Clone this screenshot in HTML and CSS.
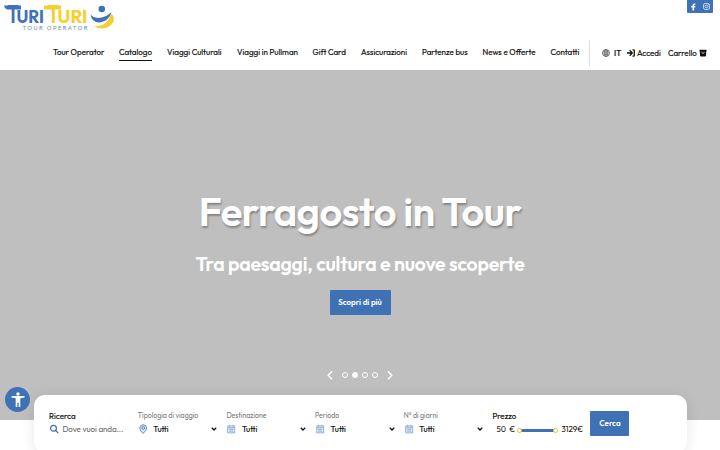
FILE: index.html
```html
<!DOCTYPE html>
<html lang="it">

<head>
    <meta charset="UTF-8">
    <meta name="viewport" content="width=device-width, initial-scale=1.0">
    <title>Turi Turi Tour Operator</title>
    <link rel="stylesheet" href="styles.css">
</head>

<body>
    <header>
        <div class="topbar">
            <a href="#" class="logo">
                <svg width="112" height="28" viewBox="0 0 112 28">
                    <g class="logo-blue">
                        <path d="M0 1.500h17v4H3Q.5 4.700 0 1.500z" />
                        <text x="3.500" y="19" font-size="25" textLength="11" lengthAdjust="spacingAndGlyphs">T</text>
                        <text x="12.500" y="19" font-size="18" textLength="27.500" lengthAdjust="spacingAndGlyphs">URI</text>
                    </g>
                    <g class="logo-yellow">
                        <path d="M40 1.500h17v4H40z" />
                        <text x="44" y="19" font-size="25" textLength="11" lengthAdjust="spacingAndGlyphs">T</text>
                        <text x="53.500" y="19" font-size="18" textLength="30" lengthAdjust="spacingAndGlyphs">URI</text>
                    </g>
                    <text class="logo-sub" x="18.500" y="25.700" textLength="65">TOUR OPERATOR</text>
                    <path fill="#f3d02f" d="M90 22.200Q104 22.500 107 9.500Q112.500 14 108 20Q101 27.500 90 22.200z" />
                    <path fill="#3f72b5" d="M86.500 10.500Q89 13.500 94 14Q101 13.800 107.500 8.200Q105 16.500 97 18.300Q88 19.500 86.500 10.500z" />
                    <circle cx="97.800" cy="5" r="3.300" fill="#3f72b5" />
                </svg>
            </a>
            <div class="social">
                <svg width="7" height="8" viewBox="0 0 7 8"><path d="M2.500 7.500V4.500H1.300V3H2.500V2Q2.500 .4 4.400 .4h1v1.300H4.800Q4.100 1.700 4.100 2.300V3H5.400L5.200 4.500H4.100v3z" fill="#fff" /></svg>
                <svg width="7" height="7" viewBox="0 0 7 7" fill="none" stroke="#fff" stroke-width=".7"><rect x=".5" y=".5" width="6" height="6" rx="1.700" /><circle cx="3.500" cy="3.500" r="1.400" /><circle cx="5.200" cy="1.800" r=".1" /></svg>
            </div>
        </div>
        <div class="menu">
            <nav>
                <a href="#">Tour Operator</a>
                <a href="#" class="active">Catalogo</a>
                <a href="#">Viaggi Culturali</a>
                <a href="#">Viaggi in Pullman</a>
                <a href="#">Gift Card</a>
                <a href="#">Assicurazioni</a>
                <a href="#">Partenze bus</a>
                <a href="#">News e Offerte</a>
                <a href="#">Contatti</a>
            </nav>
            <div class="tools">
                <a href="#" class="lang">
                    <svg width="8" height="8" viewBox="0 0 8 8" fill="none" stroke="#444" stroke-width=".6"><circle cx="4" cy="4" r="3.600" /><ellipse cx="4" cy="4" rx="1.700" ry="3.600" /><path d="M.4 4h7.200M4 .4v7.200M1 2.200h6M1 5.800h6" /></svg>
                    <span>IT</span>
                </a>
                <a href="#" class="login">
                    <svg width="8" height="8" viewBox="0 0 8 8" fill="none" stroke="#111" stroke-width="1.300"><path d="M0 4h5M2.700 1.300L5.300 4 2.700 6.700M5.500 .8H6.500Q7.300 .8 7.300 1.600V6.400Q7.300 7.200 6.500 7.200H5.500" /></svg>
                    Accedi
                </a>
                <a href="#" class="cart">
                    Carrello
                    <svg width="8" height="8" viewBox="0 0 8 8"><path d="M.5 .8h7v2h-7zM.9 2.600h6.200v3.700q0 1.200-1.200 1.200H2.100q-1.200 0-1.200-1.200z" fill="#111" /><path d="M2.500 3.300q1.500 2.200 3 0" fill="none" stroke="#fff" stroke-width=".8" /></svg>
                </a>
            </div>
        </div>
    </header>

    <section class="hero">
        <h1>Ferragosto in Tour</h1>
        <h2>Tra paesaggi, cultura e nuove scoperte</h2>
        <a href="#" class="btn">Scopri di più</a>
        <div class="slider-nav">
            <svg width="6" height="10" viewBox="0 0 6 10"><path d="M5 1.300L1.200 5.300l3.800 4" /></svg>
            <div class="dots">
                <span></span>
                <span class="on"></span>
                <span></span>
                <span></span>
            </div>
            <svg width="6" height="10" viewBox="0 0 6 10"><path d="M1 1.300l3.800 4-3.800 4" /></svg>
        </div>
    </section>

    <form class="search">
        <div class="field">
            <label class="dark">Ricerca</label>
            <div class="control">
                <svg width="10" height="10" viewBox="0 0 10 10" fill="none" stroke="#3f72b5" stroke-width="1.300"><circle cx="4.500" cy="4.300" r="2.900" /><path d="M6.600 6.400L9.200 9" /></svg>
                <span class="placeholder">Dove vuoi anda...</span>
            </div>
        </div>
        <div class="field">
            <label>Tipologia di viaggio</label>
            <div class="control">
                <svg width="10" height="10" viewBox="0 0 10 10" fill="#dce8f5" stroke="#3f72b5" stroke-width=".8"><path d="M5 9.400Q1.800 6.500 1.800 4.100a3.400 3.400 0 0 1 6.800 0Q8.600 6.500 5 9.400z" /><circle cx="5.200" cy="4" r="1.400" /></svg>
                <span class="value">Tutti</span>
                <svg class="caret" width="6" height="4" viewBox="0 0 6 4"><path d="M.8 .8L3 3 5.200 .8" /></svg>
            </div>
        </div>
        <div class="field">
            <label>Destinazione</label>
            <div class="control">
                <svg width="10" height="10" viewBox="0 0 10 10" fill="#dce8f5" stroke="#7fa5d3" stroke-width=".8"><path d="M1.700 1.900h7v7h-7zM1.700 3.700h7M3.500 .8v1.700M6.900 .8v1.700M3.200 5.400h4M3.200 7.100h4" /></svg>
                <span class="value">Tutti</span>
                <svg class="caret" width="6" height="4" viewBox="0 0 6 4"><path d="M.8 .8L3 3 5.200 .8" /></svg>
            </div>
        </div>
        <div class="field">
            <label>Periodo</label>
            <div class="control">
                <svg width="10" height="10" viewBox="0 0 10 10" fill="#dce8f5" stroke="#7fa5d3" stroke-width=".8"><path d="M1.700 1.900h7v7h-7zM1.700 3.700h7M3.500 .8v1.700M6.900 .8v1.700M3.200 5.400h4M3.200 7.100h4" /></svg>
                <span class="value">Tutti</span>
                <svg class="caret" width="6" height="4" viewBox="0 0 6 4"><path d="M.8 .8L3 3 5.200 .8" /></svg>
            </div>
        </div>
        <div class="field">
            <label>N° di giorni</label>
            <div class="control">
                <svg width="10" height="10" viewBox="0 0 10 10" fill="#dce8f5" stroke="#7fa5d3" stroke-width=".8"><path d="M1.700 1.900h7v7h-7zM1.700 3.700h7M3.500 .8v1.700M6.900 .8v1.700M3.200 5.400h4M3.200 7.100h4" /></svg>
                <span class="value">Tutti</span>
                <svg class="caret" width="6" height="4" viewBox="0 0 6 4"><path d="M.8 .8L3 3 5.200 .8" /></svg>
            </div>
        </div>
        <div class="field price">
            <label class="dark">Prezzo</label>
            <div class="control">
                <span class="min">50 &nbsp;€</span>
                <div class="range"><i></i><i></i></div>
                <span class="max">3129€</span>
            </div>
        </div>
        <button type="button" class="btn">Cerca</button>
    </form>

    <a href="#" class="accessibility">
        <svg width="16" height="16" viewBox="0 0 16 16" fill="#fff"><circle cx="8" cy="2" r="1.700" /><path d="M1.500 4h13v1.600L10.300 6.300V15H8.700v-4.200H7.300V15H5.700V6.300L1.500 5.600z" /></svg>
    </a>
</body>

</html>
```
FILE: styles.css
```css
* {
    margin: 0;
    padding: 0;
    box-sizing: border-box;
}

body {
    height: 450px;
    overflow: hidden;
    background: #fff;
    font-family: Outfit, Lato, 'Open Sans', sans-serif;
    color: #111;
}

a {
    color: inherit;
    text-decoration: none;
}

svg {
    display: block;
    flex-shrink: 0;
}

header {
    height: 70px;
}

.topbar {
    height: 36px;
    display: flex;
    justify-content: space-between;
    align-items: flex-start;
    padding: 0 7px 0 4px;
}

.logo {
    padding-top: 4px;
}

.logo svg {
    overflow: visible;
}

.logo text {
    font-weight: 700;
}

.logo-blue {
    fill: #3f72b5;
}

.logo-yellow {
    fill: #f3d02f;
}

.logo .logo-sub {
    font-size: 6px;
    font-weight: 400;
    fill: #6f91c0;
}

.social {
    width: 26px;
    height: 13px;
    display: flex;
    justify-content: space-around;
    align-items: center;
    background: #3f72b5;
    border-radius: 0 0 1px 1px;
}

.menu {
    display: flex;
    padding-left: 53px;
    font-size: 8px;
    line-height: 10px;
}

nav {
    width: 536px;
    display: grid;
    grid-template-columns: 66px 48px 70px 75.5px 48.5px 61px 60.5px 68px 39px;
    justify-items: start;
    padding-top: 11px;
}

nav a {
    height: 14px;
    white-space: nowrap;
    -webkit-text-stroke: 0.15px #111;
}

nav .active {
    border-bottom: 1px solid #111;
}

.tools {
    height: 26px;
    display: flex;
    align-items: center;
    margin-top: 4px;
    padding-left: 12px;
    border-left: 1px solid #ddd;
}

.tools a {
    display: flex;
    align-items: center;
    gap: 2px;
    white-space: nowrap;
    -webkit-text-stroke: 0.15px #111;
}

.tools .lang {
    width: 25px;
    gap: 4px;
    font-weight: 500;
}

.tools .login {
    width: 41px;
}

.hero {
    height: 350px;
    display: flex;
    flex-direction: column;
    align-items: center;
    padding-top: 117px;
    background: #bfbfbf;
    color: #fff;
}

h1 {
    font-size: 40px;
    line-height: 48px;
    font-weight: 600;
    letter-spacing: -0.45px;
    white-space: nowrap;
    text-shadow: 1px 2px 2px rgba(0, 0, 0, 0.3);
}

h2 {
    margin-top: 17px;
    font-size: 19.5px;
    line-height: 24px;
    font-weight: 600;
    letter-spacing: -0.22px;
    white-space: nowrap;
}

.btn {
    display: block;
    border: none;
    border-radius: 1px;
    background: #3f72b5;
    color: #fff;
    font-family: inherit;
    font-size: 8px;
    font-weight: 600;
    line-height: 25px;
    text-align: center;
}

.hero .btn {
    width: 61px;
    margin-top: 13.5px;
}

.slider-nav {
    display: flex;
    align-items: center;
    gap: 9px;
    margin-top: 55px;
}

.slider-nav path {
    fill: none;
    stroke: #fff;
    stroke-width: 1.4;
}

.dots {
    display: flex;
    gap: 4px;
}

.dots span {
    width: 6px;
    height: 6px;
    border: 1px solid #fff;
    border-radius: 50%;
}

.dots .on {
    background: #fff;
}

.search {
    position: relative;
    width: 653px;
    height: 58px;
    display: flex;
    margin: -25px 0 0 34px;
    padding: 16px 0 0 15px;
    border-radius: 11px;
    background: #fff;
    box-shadow: 0 2px 14px rgba(0, 0, 0, 0.1);
}

.field {
    width: 88.7px;
    padding-right: 9px;
}

.field label {
    display: block;
    font-size: 7px;
    line-height: 10px;
    color: #777;
    white-space: nowrap;
}

.field .dark {
    font-size: 8px;
    color: #111;
    -webkit-text-stroke: 0.15px #111;
}

.control {
    height: 16px;
    display: flex;
    align-items: center;
    font-size: 8px;
    white-space: nowrap;
}

.placeholder {
    margin-left: 3.5px;
    color: #666;
    letter-spacing: -0.05px;
}

.value {
    flex: 1;
    margin-left: 5.5px;
    -webkit-text-stroke: 0.15px #111;
}

.caret path {
    fill: none;
    stroke: #111;
    stroke-width: 1.3;
}

.price {
    width: 98px;
    padding-right: 0;
}

.min {
    width: 25px;
    padding-left: 4px;
}

.range {
    width: 41px;
    height: 5px;
    display: flex;
    justify-content: space-between;
    align-items: center;
    margin-top: 3px;
    background: linear-gradient(#3f72b5, #3f72b5) center / 33px 3px no-repeat;
}

.range i {
    width: 5px;
    height: 5px;
    border: 1px solid #dfc520;
    border-radius: 50%;
    background: #fff;
}

.max {
    margin-left: 3px;
}

.search .btn {
    width: 39px;
    height: 25px;
}

.accessibility {
    position: absolute;
    left: 5px;
    top: 387px;
    width: 25px;
    height: 25px;
    display: flex;
    justify-content: center;
    align-items: center;
    border-radius: 50%;
    background: #3f72b5;
}
```
